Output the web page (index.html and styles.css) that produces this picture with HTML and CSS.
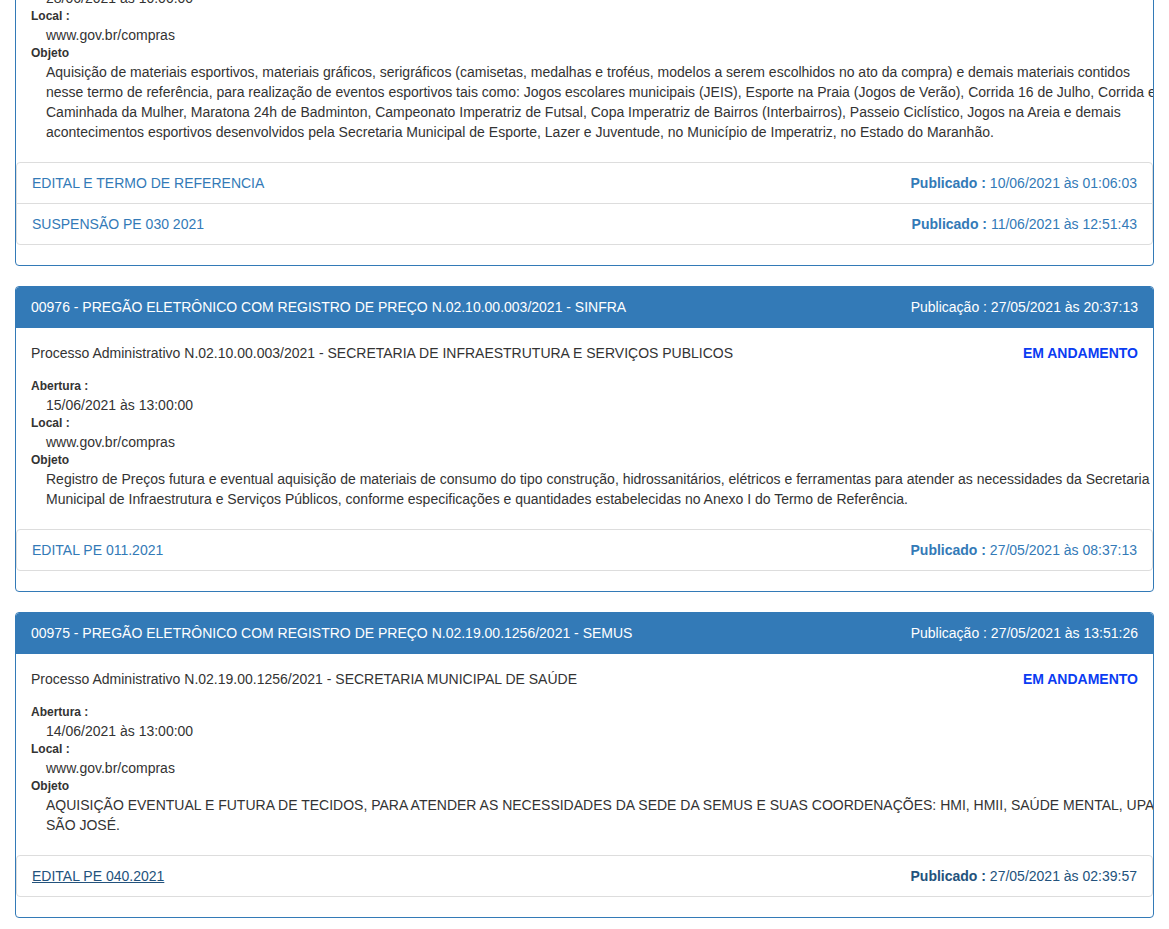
FILE: index.html
```html
<!DOCTYPE html>
<html lang="pt-BR">
<head>
  <meta charset="UTF-8">
  <title>Licitações</title>
  <link rel="stylesheet" href="styles.css">
</head>
<body>
  <div class="container">

    <!-- 00977 -->
    <div class="panel first">
      <div class="panel-heading">
        <span>00977 - PREGÃO ELETRÔNICO COM REGISTRO DE PREÇO N.02.20.00.030/2021 - SEMJUV</span>
        <span>Publicação : 09/06/2021 às 18:12:40</span>
      </div>
      <div class="panel-body">
        <div class="processo">
          <span>Processo Administrativo N.02.20.00.030/2021 - SECRETARIA MUNICIPAL DE ESPORTE, LAZER E JUVENTUDE</span>
          <strong class="status">SUSPENSA</strong>
        </div>
        <dl class="info">
          <dt>Abertura :</dt>
          <dd>28/06/2021 às 10:00:00</dd>
          <dt>Local :</dt>
          <dd>www.gov.br/compras</dd>
          <dt>Objeto</dt>
          <dd class="objeto">Aquisição de materiais esportivos, materiais gráficos, serigráficos (camisetas, medalhas e troféus, modelos a serem escolhidos no ato da compra) e demais materiais contidos nesse termo de referência, para realização de eventos esportivos tais como: Jogos escolares municipais (JEIS), Esporte na Praia (Jogos de Verão), Corrida 16 de Julho, Corrida e Caminhada da Mulher, Maratona 24h de Badminton, Campeonato Imperatriz de Futsal, Copa Imperatriz de Bairros (Interbairros), Passeio Ciclístico, Jogos na Areia e demais acontecimentos esportivos desenvolvidos pela Secretaria Municipal de Esporte, Lazer e Juventude, no Município de Imperatriz, no Estado do Maranhão.</dd>
        </dl>
      </div>
      <div class="list-group">
        <div class="list-group-item">
          <a href="#">EDITAL E TERMO DE REFERENCIA</a>
          <span class="pub"><strong>Publicado :</strong> 10/06/2021 às 01:06:03</span>
        </div>
        <div class="list-group-item">
          <a href="#">SUSPENSÃO PE 030 2021</a>
          <span class="pub"><strong>Publicado :</strong> 11/06/2021 às 12:51:43</span>
        </div>
      </div>
    </div>

    <!-- 00976 -->
    <div class="panel">
      <div class="panel-heading">
        <span>00976 - PREGÃO ELETRÔNICO COM REGISTRO DE PREÇO N.02.10.00.003/2021 - SINFRA</span>
        <span>Publicação : 27/05/2021 às 20:37:13</span>
      </div>
      <div class="panel-body">
        <div class="processo">
          <span>Processo Administrativo N.02.10.00.003/2021 - SECRETARIA DE INFRAESTRUTURA E SERVIÇOS PUBLICOS</span>
          <strong class="status">EM ANDAMENTO</strong>
        </div>
        <dl class="info">
          <dt>Abertura :</dt>
          <dd>15/06/2021 às 13:00:00</dd>
          <dt>Local :</dt>
          <dd>www.gov.br/compras</dd>
          <dt>Objeto</dt>
          <dd class="objeto">Registro de Preços futura e eventual aquisição de materiais de consumo do tipo construção, hidrossanitários, elétricos e ferramentas para atender as necessidades da Secretaria Municipal de Infraestrutura e Serviços Públicos, conforme especificações e quantidades estabelecidas no Anexo I do Termo de Referência.</dd>
        </dl>
      </div>
      <div class="list-group">
        <div class="list-group-item">
          <a href="#">EDITAL PE 011.2021</a>
          <span class="pub"><strong>Publicado :</strong> 27/05/2021 às 08:37:13</span>
        </div>
      </div>
    </div>

    <!-- 00975 -->
    <div class="panel">
      <div class="panel-heading">
        <span>00975 - PREGÃO ELETRÔNICO COM REGISTRO DE PREÇO N.02.19.00.1256/2021 - SEMUS</span>
        <span>Publicação : 27/05/2021 às 13:51:26</span>
      </div>
      <div class="panel-body">
        <div class="processo">
          <span>Processo Administrativo N.02.19.00.1256/2021 - SECRETARIA MUNICIPAL DE SAÚDE</span>
          <strong class="status">EM ANDAMENTO</strong>
        </div>
        <dl class="info">
          <dt>Abertura :</dt>
          <dd>14/06/2021 às 13:00:00</dd>
          <dt>Local :</dt>
          <dd>www.gov.br/compras</dd>
          <dt>Objeto</dt>
          <dd class="objeto">AQUISIÇÃO EVENTUAL E FUTURA DE TECIDOS, PARA ATENDER AS NECESSIDADES DA SEDE DA SEMUS E SUAS COORDENAÇÕES: HMI, HMII, SAÚDE MENTAL, UPA SÃO JOSÉ.</dd>
        </dl>
      </div>
      <div class="list-group">
        <div class="list-group-item hover">
          <a href="#">EDITAL PE 040.2021</a>
          <span class="pub"><strong>Publicado :</strong> 27/05/2021 às 02:39:57</span>
        </div>
      </div>
    </div>

  </div>
</body>
</html>
```

FILE: styles.css
```css
body {
  margin: 0;
  background: #fff;
  font-family: "Liberation Sans", Arial, Helvetica, sans-serif;
  font-size: 14px;
  line-height: 20px;
  color: #333;
}

.container {
  padding: 0 15px;
}

.panel {
  border: 1px solid #337ab7;
  border-radius: 4px;
  margin-bottom: 20px;
  background: #fff;
  overflow: hidden;
}

/* page is scrolled: first panel starts above the window */
.panel.first {
  margin-top: -121px;
}

.panel-heading {
  display: flex;
  justify-content: space-between;
  background: #337ab7;
  color: #fff;
  padding: 10px 15px;
  border-bottom: 1px solid #337ab7;
  border-radius: 3px 3px 0 0;
}

.panel-body {
  padding: 15px 15px 20px;
}

.processo {
  display: flex;
  justify-content: space-between;
  margin-bottom: 15px;
}

.status {
  color: #0a3cf2;
  font-weight: bold;
}

.info {
  margin: 0;
}

.info dt {
  font-size: 12px;
  line-height: 17px;
  font-weight: bold;
}

.info dd {
  margin: 0 0 0 15px;
}

.info dd.objeto {
  margin-right: -25px;
}

.list-group {
  margin-bottom: 20px;
}

.list-group-item {
  display: flex;
  justify-content: space-between;
  padding: 10px 15px;
  border: 1px solid #ddd;
  margin-bottom: -1px;
  color: #337ab7;
}

.list-group-item:first-child {
  border-radius: 4px 4px 0 0;
}

.list-group-item:last-child {
  border-radius: 0 0 4px 4px;
  margin-bottom: 0;
}

.list-group-item:only-child {
  border-radius: 4px;
}

.list-group-item a {
  color: #337ab7;
  text-decoration: none;
}

.list-group-item.hover,
.list-group-item.hover a {
  color: #23527c;
}

.list-group-item.hover a {
  text-decoration: underline;
}

.pub strong {
  font-weight: bold;
}
```
